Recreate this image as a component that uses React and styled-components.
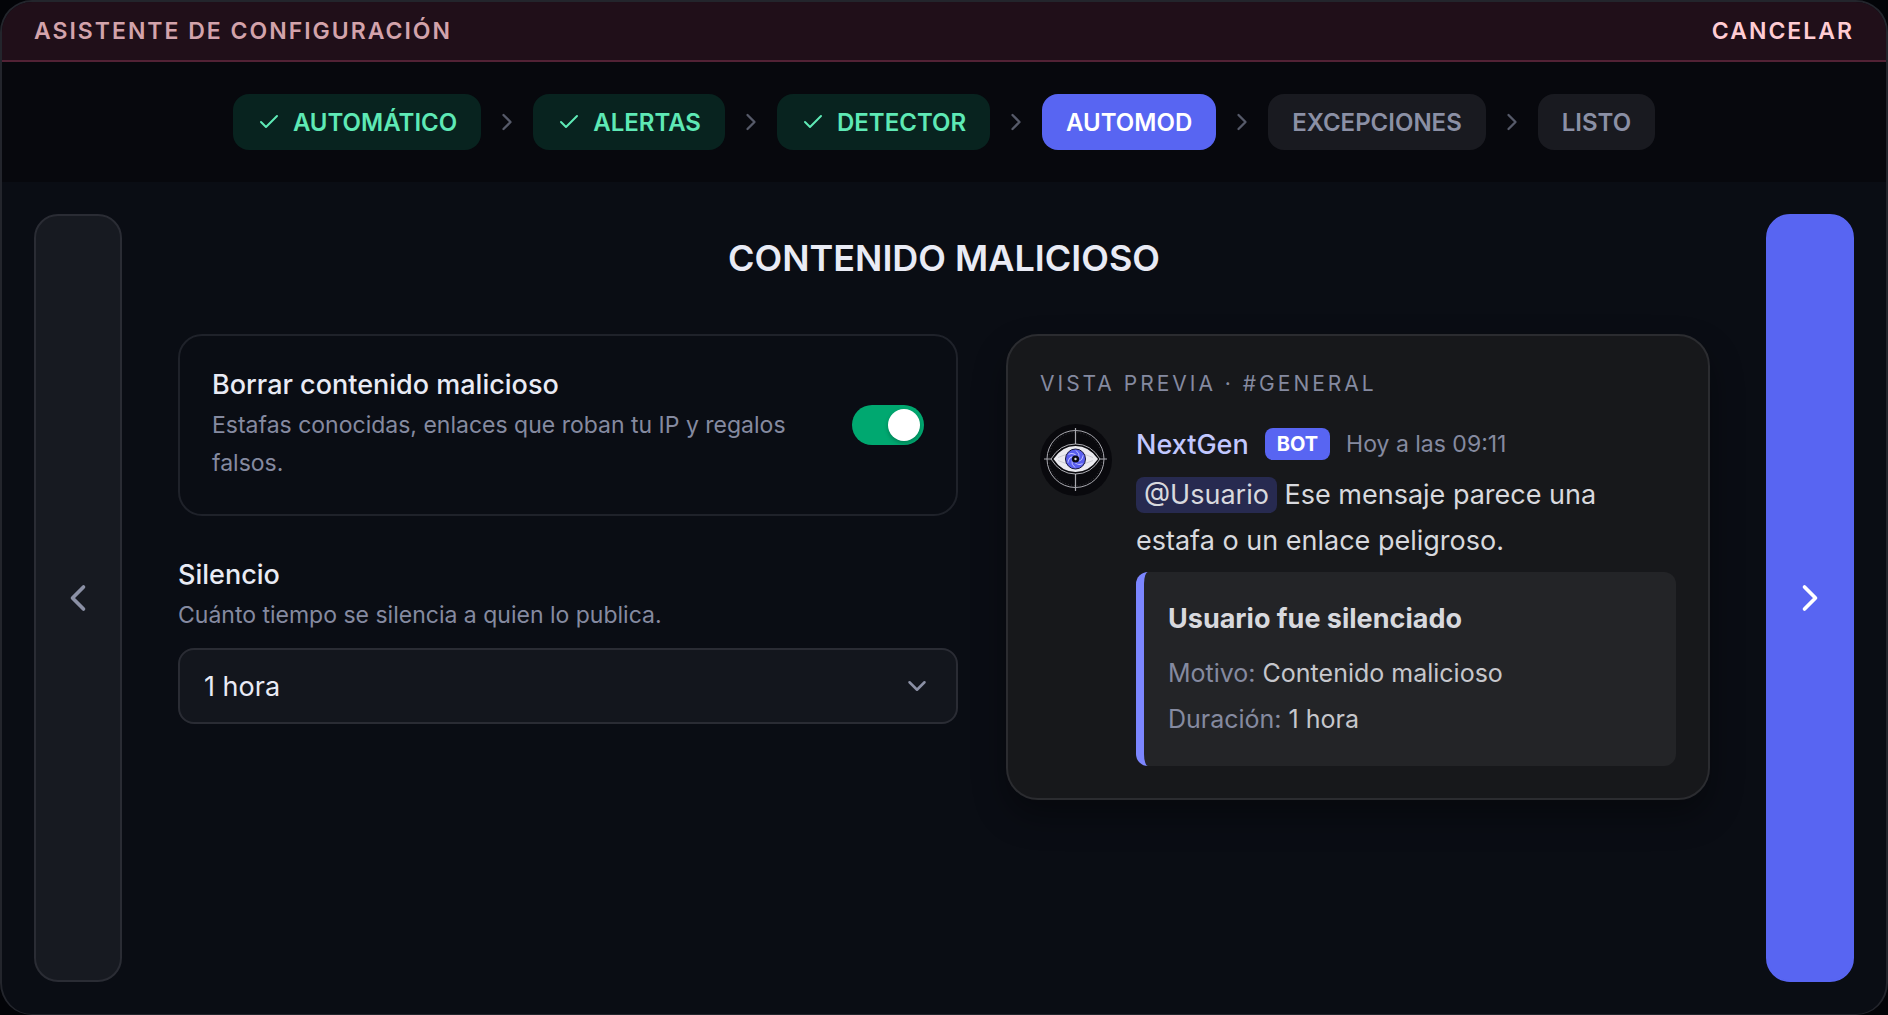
import React, { useState } from "react";
import styled, { createGlobalStyle } from "styled-components";
import { Check, ChevronDown, ChevronLeft, ChevronRight } from "lucide-react";

const steps = [
  { name: "Automático", state: "done" },
  { name: "Alertas", state: "done" },
  { name: "Detector", state: "done" },
  { name: "Automod", state: "current" },
  { name: "Excepciones", state: "pending" },
  { name: "Listo", state: "pending" },
];

const durations = ["10 minutos", "1 hora", "1 día", "1 semana"];

// angles of the blades inside the iris
const blades = [0, 60, 120, 180, 240, 300];

const EyeLogo = () => (
  <svg viewBox="0 0 72 72" width="72" height="72" aria-hidden="true">
    <circle cx="36" cy="36" r="36" fill="#09090d" />
    <g fill="none" stroke="#a9a9b0">
      <circle cx="35.5" cy="35" r="28.5" strokeWidth="1" />
      <circle
        cx="35.5"
        cy="35"
        r="26.5"
        strokeWidth="0.6"
        strokeDasharray="1 2"
        opacity="0.4"
      />
      <path d="M35.5 4v63M4 35h8M59 35h8" strokeWidth="1.2" />
    </g>
    <path
      d="M11 35Q20 20 35.5 20T60 35Q51 50 35.5 50T11 35Z"
      fill="#09090d"
      stroke="#d6d6dc"
      strokeWidth="0.8"
    />
    <path
      d="M13.5 35Q22 22 35.5 22T58 35Q49 48 35.5 48T13.5 35Z"
      fill="#ebebf0"
    />
    <path
      d="M18 33.5l8-3M18 36.5l8 3M53 33.5l-8-3M53 36.5l-8 3"
      stroke="#b5b5bf"
      strokeWidth="0.6"
    />
    <circle cx="35.5" cy="35" r="10" fill="#5a5ff0" stroke="#15163a" />
    {blades.map((angle) => (
      <path
        key={angle}
        d="M39 33.5q1-4-3-7"
        transform={`rotate(${angle} 35.5 35)`}
        fill="none"
        stroke="#c3c6ff"
        strokeWidth="0.9"
      />
    ))}
    <circle cx="35.5" cy="35" r="3.6" fill="#0b0b12" />
    <circle cx="35.5" cy="35" r="1.2" fill="#d8d8e0" />
  </svg>
);

const App = () => {
  const [enabled, setEnabled] = useState(true);
  const [duration, setDuration] = useState("1 hora");

  return (
    <>
      <GlobalStyle />
      <Panel>
        <Header>
          <HeaderTitle>Asistente de configuración</HeaderTitle>
          <CancelButton type="button">Cancelar</CancelButton>
        </Header>

        <Steps>
          {steps.map((step, index) => (
            <React.Fragment key={step.name}>
              {index > 0 && <ChevronRight size={28} strokeWidth={2} />}
              <Step
                $state={step.state}
                aria-current={step.state === "current" ? "step" : undefined}
              >
                {step.state === "done" && <Check size={24} strokeWidth={2} />}
                {step.name}
              </Step>
            </React.Fragment>
          ))}
        </Steps>

        <Body>
          <NavButton type="button" aria-label="Anterior">
            <ChevronLeft size={44} />
          </NavButton>

          <Content>
            <Title>Contenido malicioso</Title>
            <Columns>
              <Settings>
                <ToggleCard>
                  <ToggleText>
                    <Label htmlFor="delete-content">
                      Borrar contenido malicioso
                    </Label>
                    <Hint>
                      Estafas conocidas, enlaces que roban tu IP y regalos
                      falsos.
                    </Hint>
                  </ToggleText>
                  <Toggle
                    id="delete-content"
                    type="checkbox"
                    role="switch"
                    checked={enabled}
                    onChange={(e) => setEnabled(e.target.checked)}
                  />
                </ToggleCard>

                <Field>
                  <Label htmlFor="duration">Silencio</Label>
                  <Hint>Cuánto tiempo se silencia a quien lo publica.</Hint>
                  <SelectBox>
                    <Select
                      id="duration"
                      value={duration}
                      onChange={(e) => setDuration(e.target.value)}
                    >
                      {durations.map((item) => (
                        <option key={item}>{item}</option>
                      ))}
                    </Select>
                    <ChevronDown size={30} />
                  </SelectBox>
                </Field>
              </Settings>

              <Preview>
                <PreviewLabel>Vista previa · #general</PreviewLabel>
                <Message>
                  <EyeLogo />
                  <MessageBody>
                    <MessageHead>
                      <BotName>NextGen</BotName>
                      <BotBadge>BOT</BotBadge>
                      <Time>Hoy a las 09:11</Time>
                    </MessageHead>
                    <MessageText>
                      <Mention>@Usuario</Mention> Ese mensaje parece una estafa
                      o un enlace peligroso.
                    </MessageText>
                    <Embed>
                      <EmbedTitle>Usuario fue silenciado</EmbedTitle>
                      <EmbedRow>
                        <span>Motivo:</span> Contenido malicioso
                      </EmbedRow>
                      <EmbedRow>
                        <span>Duración:</span> {duration}
                      </EmbedRow>
                    </Embed>
                  </MessageBody>
                </Message>
              </Preview>
            </Columns>
          </Content>

          <NavButton type="button" aria-label="Siguiente" $primary>
            <ChevronRight size={44} />
          </NavButton>
        </Body>
      </Panel>
    </>
  );
};

const GlobalStyle = createGlobalStyle`
  * {
    box-sizing: border-box;
  }
  body {
    margin: 0;
    background: #030408;
    color: #e9ebf5;
    font-family: Inter, "Liberation Sans", sans-serif;
  }
  button, select {
    font-family: inherit;
  }
  h1, p {
    margin: 0;
  }
`;

const Panel = styled.div`
  display: flex;
  flex-direction: column;
  min-height: 100vh;
  border: 2px solid #23252c;
  border-bottom-width: 1px;
  border-radius: 32px;
  overflow: hidden;
  background: #0a0d14;
`;

const Header = styled.header`
  display: flex;
  justify-content: space-between;
  align-items: center;
  height: 60px;
  padding: 0 32px;
  background: #200f19;
  border-bottom: 2px solid #522235;
`;

const HeaderTitle = styled.span`
  color: #d3a3ab;
  font-size: 23px;
  font-weight: 600;
  letter-spacing: 2px;
  line-height: 28px;
  text-transform: uppercase;
`;

const CancelButton = styled.button`
  padding: 0;
  border: none;
  background: none;
  color: #ffccd3;
  font-size: 23px;
  font-weight: 600;
  letter-spacing: 2px;
  line-height: 28px;
  text-transform: uppercase;
  cursor: pointer;
`;

const Steps = styled.nav`
  display: flex;
  justify-content: center;
  align-items: center;
  gap: 12px;
  padding: 32px;
  background: #07080d;
  color: #565a69;
`;

const stepColors = {
  done: "background: #08231f; color: #5ee9b5;",
  current: "background: #5865f2; color: #ffffff;",
  pending: "background: #191a20; color: #8b90a5;",
};

const Step = styled.div`
  display: flex;
  align-items: center;
  gap: 12px;
  height: 56px;
  padding: 0 24px;
  border-radius: 16px;
  font-size: 24px;
  font-weight: 600;
  text-transform: uppercase;
  ${(props) => stepColors[props.$state]}
`;

const Body = styled.main`
  display: flex;
  flex: 1;
  gap: 56px;
  padding: 32px;
`;

const NavButton = styled.button`
  display: flex;
  flex: none;
  justify-content: center;
  align-items: center;
  width: 88px;
  padding: 0;
  border: 2px solid ${(props) => (props.$primary ? "#5865f2" : "#2a2c34")};
  border-radius: 24px;
  background: ${(props) => (props.$primary ? "#5865f2" : "#171a21")};
  color: ${(props) => (props.$primary ? "#ffffff" : "#8b90a5")};
  cursor: pointer;
`;

const Content = styled.div`
  flex: 1;
  min-width: 0;
  padding-top: 24px;
`;

const Title = styled.h1`
  margin-bottom: 56px;
  font-size: 36px;
  font-weight: 600;
  line-height: 40px;
  text-align: center;
  text-transform: uppercase;
`;

const Columns = styled.div`
  display: grid;
  grid-template-columns: minmax(0, 1fr) 704px;
  align-items: start;
  gap: 48px;
`;

const Settings = styled.div`
  display: flex;
  flex-direction: column;
  gap: 42px;
`;

const ToggleCard = styled.div`
  display: flex;
  justify-content: space-between;
  align-items: center;
  gap: 32px;
  padding: 32px;
  border: 2px solid #1f222a;
  border-radius: 24px;
`;

const ToggleText = styled.div`
  display: flex;
  flex-direction: column;
  gap: 4px;
`;

const Label = styled.label`
  font-size: 27px;
  font-weight: 500;
  line-height: 34px;
`;

const Hint = styled.p`
  color: #858aa0;
  font-size: 23px;
  line-height: 38px;
`;

const Toggle = styled.input`
  display: flex;
  flex: none;
  justify-content: ${(props) => (props.checked ? "flex-end" : "flex-start")};
  width: 72px;
  height: 40px;
  margin: 0;
  padding: 4px;
  border-radius: 20px;
  background: ${(props) => (props.checked ? "#00a870" : "#2a2c34")};
  appearance: none;
  cursor: pointer;

  &::before {
    content: "";
    width: 32px;
    border-radius: 50%;
    background: #ffffff;
    box-shadow: 0 2px 4px rgba(0, 0, 0, 0.25);
  }
`;

const Field = styled.div`
  display: flex;
  flex-direction: column;
  gap: 4px;
`;

const SelectBox = styled.div`
  display: grid;
  align-items: center;
  margin-top: 10px;

  > * {
    grid-area: 1 / 1;
  }

  svg {
    justify-self: end;
    margin-right: 26px;
    color: #8b90a5;
    pointer-events: none;
  }
`;

const Select = styled.select`
  width: 100%;
  height: 76px;
  padding: 0 24px;
  border: 2px solid #2a2c34;
  border-radius: 16px;
  background: #13161d;
  color: #e9ebf5;
  font-size: 27px;
  appearance: none;
`;

const Preview = styled.section`
  padding: 32px;
  border: 2px solid #2b2c30;
  border-radius: 32px;
  background: #17181b;
  box-shadow: 0 16px 32px rgba(0, 0, 0, 0.35);
`;

const PreviewLabel = styled.p`
  margin-bottom: 24px;
  color: #858aa0;
  font-size: 21px;
  line-height: 32px;
  letter-spacing: 3px;
  text-transform: uppercase;
`;

const Message = styled.div`
  display: flex;
  gap: 24px;

  > svg {
    flex: none;
  }
`;

const MessageBody = styled.div`
  flex: 1;
  min-width: 0;
`;

const MessageHead = styled.div`
  display: flex;
  align-items: center;
  gap: 16px;
  height: 40px;
  margin-bottom: 8px;
`;

const BotName = styled.span`
  color: #c2c8ff;
  font-size: 27px;
  font-weight: 500;
`;

const BotBadge = styled.span`
  padding: 0 12px;
  border-radius: 8px;
  background: #5865f2;
  color: #ffffff;
  font-size: 20px;
  font-weight: 700;
  line-height: 32px;
`;

const Time = styled.span`
  color: #858aa0;
  font-size: 23px;
`;

const MessageText = styled.p`
  color: #d8d9de;
  font-size: 27px;
  line-height: 46px;
`;

const Mention = styled.span`
  display: inline-block;
  padding: 0 8px;
  border-radius: 8px;
  background: #272a50;
  line-height: 36px;
`;

const Embed = styled.div`
  margin-top: 8px;
  padding: 24px;
  border-left: 8px solid #7c86ff;
  border-radius: 12px;
  background: #232427;
`;

const EmbedTitle = styled.p`
  margin-bottom: 8px;
  color: #d8d9de;
  font-size: 27px;
  font-weight: 700;
  line-height: 46px;
`;

const EmbedRow = styled.p`
  color: #c6c7cc;
  font-size: 25px;
  line-height: 46px;

  span {
    color: #858aa0;
  }
`;

export default App;
